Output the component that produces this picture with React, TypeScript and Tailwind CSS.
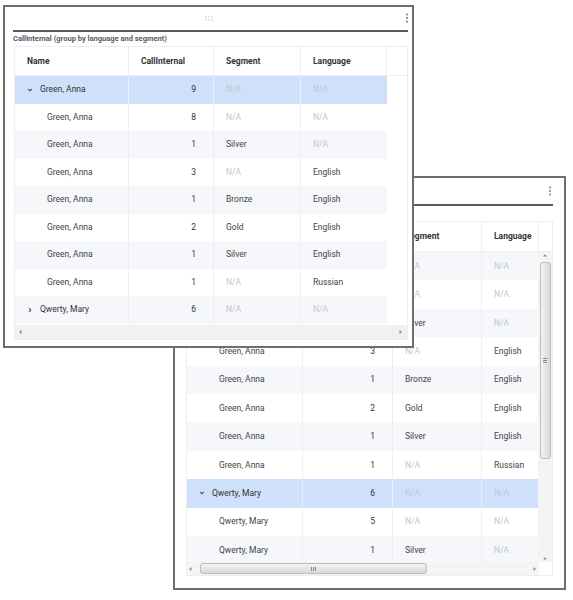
import React from "react";

type Row = {
  name: string;
  n: number;
  seg?: string;
  lang?: string;
  group?: boolean;
  open?: boolean;
};

const frontRows: Row[] = [
  { name: "Green, Anna", n: 9, group: true, open: true },
  { name: "Green, Anna", n: 8 },
  { name: "Green, Anna", n: 1, seg: "Silver" },
  { name: "Green, Anna", n: 3, lang: "English" },
  { name: "Green, Anna", n: 1, seg: "Bronze", lang: "English" },
  { name: "Green, Anna", n: 2, seg: "Gold", lang: "English" },
  { name: "Green, Anna", n: 1, seg: "Silver", lang: "English" },
  { name: "Green, Anna", n: 1, lang: "Russian" },
  { name: "Qwerty, Mary", n: 6, group: true, open: false },
];

const backRows: Row[] = [
  ...frontRows.slice(0, 8),
  { name: "Qwerty, Mary", n: 6, group: true, open: true },
  { name: "Qwerty, Mary", n: 5 },
  { name: "Qwerty, Mary", n: 1, seg: "Silver" },
];

function Kebab() {
  return (
    <svg width="4" height="10" viewBox="0 0 4 10">
      <circle cx="2" cy="1.5" r="1" fill="#7a7a7a" />
      <circle cx="2" cy="5" r="1" fill="#7a7a7a" />
      <circle cx="2" cy="8.5" r="1" fill="#7a7a7a" />
    </svg>
  );
}

function Grip() {
  return (
    <svg width="8" height="5" viewBox="0 0 8 5">
      {[1, 4, 7].map((x) =>
        [1, 4].map((y) => <rect key={`${x}-${y}`} x={x - 0.5} y={y - 0.5} width="1" height="1" fill="#9a9a9a" />)
      )}
    </svg>
  );
}

function Chevron({ open }: { open?: boolean }) {
  return open ? (
    <svg width="6" height="6" viewBox="0 0 6 6">
      <path d="M1.2 2 L3 3.8 L4.8 2" stroke="#555" strokeWidth="1.1" fill="none" />
    </svg>
  ) : (
    <svg width="6" height="6" viewBox="0 0 6 6">
      <path d="M2 1.2 L3.8 3 L2 4.8" stroke="#555" strokeWidth="1.1" fill="none" />
    </svg>
  );
}

function Tri({ dir }: { dir: "l" | "r" | "u" | "d" }) {
  const d = {
    l: "M3.5 1 L1 3 L3.5 5 Z",
    r: "M1.5 1 L4 3 L1.5 5 Z",
    u: "M1 3.5 L3 1.2 L5 3.5 Z",
    d: "M1 1.8 L3 4 L5 1.8 Z",
  }[dir];
  return (
    <svg width="6" height="6" viewBox="0 0 6 6">
      <path d={d} fill="#8a8a8a" />
    </svg>
  );
}

function Cells({ row, cols, rowH, sel, stripe }: { row: Row; cols: number[]; rowH: string; sel: boolean; stripe: boolean }) {
  const bg = sel ? "bg-[#cfe0fa]" : stripe ? "bg-[#f5f7fb]" : "bg-white";
  const na = <span className="text-[#c3c7ce]">N/A</span>;
  const total = cols.reduce((a, b) => a + b, 0);
  return (
    <div className={`flex ${rowH} ${bg} shrink-0`} style={{ width: total }}>
      <div className="flex items-center pl-3 border-r border-[#eceef2] text-[#444]" style={{ width: cols[0] }}>
        {row.group ? (
          <>
            <Chevron open={row.open} />
            <span className="ml-[7px] text-[#333]">{row.name}</span>
          </>
        ) : (
          <span className="ml-5">{row.name}</span>
        )}
      </div>
      <div className="flex items-center justify-end pr-[17px] border-r border-[#eceef2] text-[#333]" style={{ width: cols[1] }}>
        {row.n}
      </div>
      <div className="flex items-center pl-3 border-r border-[#eceef2] text-[#444]" style={{ width: cols[2] }}>
        {row.seg ?? na}
      </div>
      <div className="flex items-center pl-3 text-[#444]" style={{ width: cols[3] }}>
        {row.lang ?? na}
      </div>
    </div>
  );
}

function Header({ cols }: { cols: number[] }) {
  const names = ["Name", "CallInternal", "Segment", "Language"];
  return (
    <div className="flex h-full font-bold text-[#333]">
      {names.map((n, i) => (
        <div key={n} className="flex items-center pl-3 border-r border-[#eceef2]" style={{ width: cols[i] }}>
          {n}
        </div>
      ))}
      <div className="flex-1" />
    </div>
  );
}

function FrontWindow() {
  const cols = [114, 85, 87, 86];
  return (
    <div className="absolute left-[3px] top-[5px] w-[411px] h-[343px] border-2 border-[#6e6e6e] bg-white flex flex-col">
      <div className="relative h-[23px] shrink-0 flex items-center justify-center">
        <Grip />
        <div className="absolute right-[3px] top-[6px]">
          <Kebab />
        </div>
      </div>
      <div className="h-[2px] bg-[#5c5c5c] ml-[8px] mr-[4px] shrink-0" />
      <div className="h-[14px] shrink-0 flex items-center pl-[8px] text-[7.5px] font-bold text-[#555b66]">
        CallInternal (group by language and segment)
      </div>
      <div className="ml-[9px] mr-[4px] border border-[#eceef2] flex flex-col">
        <div className="h-[29px] border-b border-[#eceef2]">
          <Header cols={cols} />
        </div>
        {frontRows.map((r, i) => (
          <Cells key={i} row={r} cols={cols} rowH="h-[27.5px]" sel={i === 0} stripe={i % 2 === 0} />
        ))}
        <div className="h-[14px] mt-[1px] bg-[#f1f1f1] flex items-center justify-between px-[3px]">
          <Tri dir="l" />
          <Tri dir="r" />
        </div>
      </div>
    </div>
  );
}

function BackWindow() {
  const cols = [116, 90, 89, 57];
  return (
    <div className="absolute left-[173px] top-[176px] w-[393px] h-[414px] border-2 border-[#6e6e6e] bg-white flex flex-col">
      <div className="relative h-[26px] shrink-0">
        <div className="absolute right-[12px] top-[8px]">
          <Kebab />
        </div>
      </div>
      <div className="h-[2px] bg-[#5c5c5c] mx-[11px] shrink-0" />
      <div className="h-[15px] shrink-0 flex items-center pl-[11px] text-[7.5px] font-bold text-[#555b66]">
        CallInternal (group by language and segment)
      </div>
      <div className="mx-[11px] border border-[#eceef2] flex flex-col">
        <div className="h-[30px] border-b border-[#eceef2]">
          <Header cols={cols} />
        </div>
        <div className="flex h-[310px]">
          <div className="flex flex-col overflow-hidden w-[352px]">
            {backRows.map((r, i) => (
              <Cells key={i} row={r} cols={cols} rowH="h-[28.4px]" sel={i === 8} stripe={i % 2 === 0} />
            ))}
          </div>
          <div className="w-[14px] bg-[#f4f4f4] flex flex-col items-center pt-[1px]">
            <Tri dir="u" />
            <div className="mt-[3px] w-[11px] h-[197px] rounded-[3px] border border-[#bdbdbd] bg-linear-to-r from-[#f4f4f4] to-[#d8d8d8] flex items-center justify-center">
              <div className="flex flex-col gap-[1px]">
                <div className="w-[4px] h-px bg-[#8a8a8a]" />
                <div className="w-[4px] h-px bg-[#8a8a8a]" />
                <div className="w-[4px] h-px bg-[#8a8a8a]" />
              </div>
            </div>
            <div className="flex-1" />
            <Tri dir="d" />
          </div>
        </div>
        <div className="flex h-[13px]">
          <div className="w-[352px] bg-[#f4f4f4] flex items-center px-[1px]">
            <Tri dir="l" />
            <div className="ml-[6px] w-[227px] h-[11px] rounded-[3px] border border-[#bdbdbd] bg-linear-to-b from-[#f4f4f4] to-[#d8d8d8] flex items-center justify-center">
              <div className="flex gap-[1px]">
                <div className="h-[4px] w-px bg-[#8a8a8a]" />
                <div className="h-[4px] w-px bg-[#8a8a8a]" />
                <div className="h-[4px] w-px bg-[#8a8a8a]" />
              </div>
            </div>
            <div className="flex-1" />
            <Tri dir="r" />
          </div>
          <div className="flex-1 bg-white" />
        </div>
      </div>
    </div>
  );
}

export default function App() {
  return (
    <div className="relative w-[573px] h-[600px] bg-white overflow-hidden text-[8.5px]" style={{ fontFamily: "Roboto, 'Liberation Sans', sans-serif" }}>
      <BackWindow />
      <FrontWindow />
    </div>
  );
}
